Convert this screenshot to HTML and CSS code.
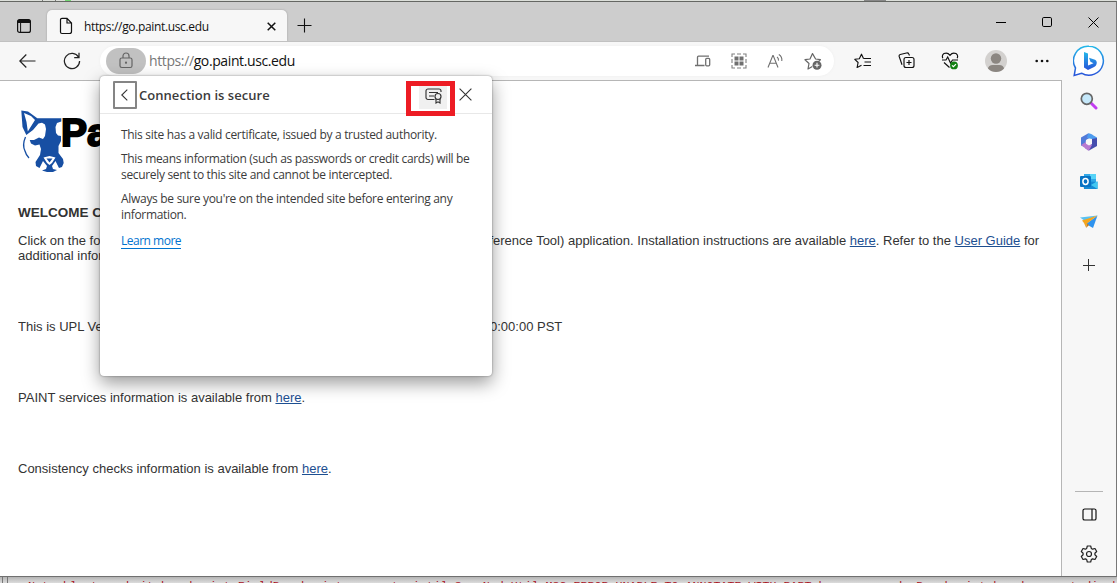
FILE: index.html
```html
<!DOCTYPE html>
<html lang="en">
<head>
<meta charset="utf-8">
<title>go.paint.usc.edu</title>
<link rel="stylesheet" href="styles.css">
</head>
<body>
<div class="desk-top"><i class="d1"></i><i class="d2"></i><i class="d3"></i><i class="d4"></i></div>
<div class="window">
  <header class="titlebar">
    <svg class="workspace" width="16" height="16" viewBox="0 0 16 16"><rect x="1.6" y="1.6" width="12.8" height="12.8" rx="2" fill="none" stroke="#111" stroke-width="1.2"/><path d="M1.5 5V3.5a2 2 0 0 1 2-2h9a2 2 0 0 1 2 2V5z" fill="#111"/><path d="M4.6 5v9" stroke="#111"/></svg>
    <div class="tab">
      <svg width="14" height="18" viewBox="0 0 14 18" fill="none" stroke="#111" stroke-width="1.2"><path d="M3 1.3h5L12.5 6v8.5a2 2 0 0 1-2 2H3a1.5 1.5 0 0 1-1.5-1.5V2.8A1.5 1.5 0 0 1 3 1.3zM8 1.5V6h4.5"/></svg>
      <span class="tab-title">https://go.paint.usc.edu</span>
      <svg class="tab-close" width="9" height="9" viewBox="0 0 9 9"><path d="M.7.7l7.6 7.6M8.3.7L.7 8.3" stroke="#111" stroke-width="1.5"/></svg>
    </div>
    <svg class="newtab" width="15" height="15" viewBox="0 0 15 15"><path d="M7.5.5v14M.5 7.5h14" stroke="#111" stroke-width="1.1"/></svg>
    <div class="controls">
      <svg width="10" height="11" viewBox="0 0 10 11"><path d="M0 5.5h10" stroke="#000"/></svg>
      <svg width="10" height="10" viewBox="0 0 10 10"><rect x=".5" y=".5" width="9" height="9" rx="1.3" fill="none" stroke="#000"/></svg>
      <svg width="11" height="11" viewBox="0 0 11 11"><path d="M.5.5l10 10M10.5.5l-10 10" stroke="#000"/></svg>
    </div>
  </header>
  <div class="body">
    <div class="main">
      <nav class="toolbar">
        <svg class="back" width="17" height="14" viewBox="0 0 17 14" fill="none" stroke="#222" stroke-width="1.2"><path d="M7.3.5L.8 7l6.5 6.5M.8 7H16.5"/></svg>
        <svg class="reload" width="18" height="18" viewBox="0 0 18 18" fill="none" stroke="#222" stroke-width="1.25"><path d="M15.6 5.2A7.6 7.6 0 1 0 16.6 9M16 .8v4.7h-4.8"/></svg>
        <div class="address">
          <span class="lock"><svg width="14" height="17" viewBox="0 0 14 17" fill="none" stroke="#656565" stroke-width="1.2"><rect x="1" y="6" width="12" height="9.5" rx="1.8"/><path d="M4 6V4a3 3 0 0 1 6 0v2"/><circle cx="7" cy="10.7" r=".5" fill="#656565"/></svg></span>
          <span class="url"><em>https://</em>go.paint.usc.edu</span>
          <div class="address-icons">
            <svg width="16" height="12" viewBox="0 0 16 12" fill="none" stroke="#707070" stroke-width="1.3"><path d="M2.5 10V2.2A1 1 0 0 1 3.5 1.2H14M0 10.5h9.5"/><rect x="10.7" y="3.4" width="4" height="7.4" rx="1"/></svg>
            <svg width="16" height="16" viewBox="0 0 16 16"><path d="M1 4V1h3M12 1h3v3M15 12v3h-3M4 15H1v-3M6 1h4M6 15h4M1 6v4M15 6v4" fill="none" stroke="#808080" stroke-width="1.1"/><path d="M3.5 3.5h4v4h-4zM8.5 3.5h4v4h-4zM3.5 8.5h4v4h-4zM8.5 8.5h4v4h-4z" fill="#707070"/></svg>
            <svg width="17" height="16" viewBox="0 0 17 16" fill="none" stroke="#707070" stroke-width="1.1"><path d="M1 14.5L5.8 2.5h.4L11 14.5M2.7 10.2h6.6M10 4q1.8 1.2 1.5 3.6M11.8 1.6q3.6 2.1 3 6.4"/></svg>
            <svg width="18" height="18" viewBox="0 0 18 18"><path d="M14.8 9.2l1.6-1.5-4.8-.7L8.5 1.6 6 7 1 7.7l4 3.8L4 17l4.3-2.5" fill="none" stroke="#666" stroke-width="1.2" stroke-linejoin="round"/><circle cx="13" cy="13.2" r="4.5" fill="#666"/><path d="M13 10.8v4.8M10.6 13.2h4.8" stroke="#fff" stroke-width="1.1"/></svg>
          </div>
        </div>
        <div class="actions">
          <svg width="18" height="16" viewBox="0 0 18 16" fill="none" stroke="#111" stroke-width="1.15"><path d="M9.5 5.5L7.5 1.2 5.3 5.7.8 6.3l3.3 3.2-1 5L7.5 12.3M9.5 5.5H17M10.5 9H17M9.5 12.5H17" stroke-linejoin="round"/></svg>
          <svg width="17" height="17" viewBox="0 0 17 17" fill="none" stroke="#111" stroke-width="1.15"><rect x="6" y="5.5" width="10" height="10" rx="2"/><path d="M11 8v5M8.5 10.5h5M4 12.8L1.2 4.5Q.8 3 2.2 2.5L8.5 1q1.7-.4 2.3 1l.7 1.5"/></svg>
          <svg width="18" height="18" viewBox="0 0 18 18" fill="none" stroke="#111" stroke-width="1.15"><path d="M1.8 6.2Q.5 3.2 3 1.6 6.5 0 9 3.3 11.5 0 15 1.6q2.5 1.6 1.2 4.6M1 8h4l1.7-3 2.8 6 2-3H17M3 10.5l5.5 5"/><circle cx="13" cy="13.4" r="3.9" fill="#128012" stroke="none"/><path d="M11 13.4l1.4 1.3 2.6-2.6" stroke="#fff"/></svg>
          <svg class="avatar" width="22" height="22" viewBox="0 0 22 22"><defs><clipPath id="av"><circle cx="11" cy="11" r="11"/></clipPath></defs><g clip-path="url(#av)"><path d="M0 0h22v22H0z" fill="#d3d1cf"/><circle cx="11" cy="8.5" r="5.2" fill="#8b8681"/><path d="M2.7 22v-3q1-4 5-4h6.6q4 0 5 4v3z" fill="#8b8681"/></g></svg>
          <svg class="more" width="14" height="4" viewBox="0 0 14 4" fill="#111"><circle cx="1.7" cy="2" r="1.3"/><circle cx="7" cy="2" r="1.3"/><circle cx="12.3" cy="2" r="1.3"/></svg>
        </div>
      </nav>
      <main class="page">
        <div class="logo">
          <svg width="44" height="64" viewBox="0 0 44 64"><path fill="#174fa3" d="M.3 .5L7 1.5L16.3 8.3H40.3V11.5L36 13L34.5 17L35 23L37 25.5L40 26V31L37.5 36V43L42 49L42.7 53L41 57L38 58L34.5 51L31 56L32 59L36 60L32 62H26L21 60.5L25 59L26 56L22 51L18.5 58L15 56L14.5 52L19 45L20 39L18.5 34.5L14 35.5L10 33.5L8.7 30H13L18 27.5L22 29L24 26L25 19L24 14.5L21 12.8L17.5 13.5L12 20L5.3 25L1.5 17Z"/><path fill="#fff" d="M3 3L10 6L14 10L6.8 21.500L5.500 12ZM22.500 47.500L28.500 46L34.500 47.500L31 53L28.500 55L26 53Z"/><path fill="#174fa3" d="M25.500 48.500h6l-3 4z"/><path fill="none" stroke="#174fa3" stroke-width="1.300" d="M4.500 27q-3.500 8-.5 14 1 4 4 7"/></svg>
          <span class="brand">Paint</span>
        </div>
        <h1>WELCOME <span>COMMUNITY</span></h1>
        <p class="intro"><span class="lead">Click on the following link to launch the PAINT (Personnel Action Re</span>ference Tool) application. Installation instructions are available <a>here</a>. Refer to the <a>User Guide</a> for<br>additional information.</p>
        <p class="version"><span class="lead">This is UPL Version 1.0.0, released on 01/01/2023 at 0</span>0:00:00 PST</p>
        <p class="services">PAINT services information is available from <a>here</a>.</p>
        <p class="checks">Consistency checks information is available from <a>here</a>.</p>
      </main>
    </div>
    <aside class="sidebar">
      <svg class="bing" width="32" height="34" viewBox="0 0 32 34"><defs><linearGradient id="bg" x2="0" y2="1"><stop stop-color="#24b8e9"/><stop offset="1" stop-color="#2754d9"/></linearGradient></defs><path d="M16 1.2a14.5 14.5 0 1 1-7.5 27L1.2 30.5 2.5 23A14.5 14.5 0 0 1 16 1.2z" fill="#fff" stroke="url(#bg)" stroke-width="1.5"/><path d="M11 7l4 1.5v12l5.5-2.3-3-1.5-1.5-4 6 2q2.5 1.5 1.500 4.500-.5 1.500-2 2.500L15 25l-4-2.500z" fill="url(#bg)"/></svg>
      <svg class="search" width="18" height="18" viewBox="0 0 18 18"><path d="M11 11l5 5" stroke="#c13cf0" stroke-width="3" stroke-linecap="round"/><circle cx="6.8" cy="6.8" r="5.5" fill="#c5e8fa" stroke="#666" stroke-width="1.7"/></svg>
      <svg class="m365" width="18" height="18" viewBox="0 0 18 18"><path d="M8 .5L1 4.5v8L5 14l1-7 6-3 1-2z" fill="#527ad9"/><path d="M8 .5h2l7 4v7l-5-2V6L7 5z" fill="#4d9cef"/><path d="M17 5v8l-8 4.5-4-2.5 7-4V6z" fill="#454dae"/><path d="M1 12l5-3 6 3-3 5.5H8z" fill="#b879d0"/><path d="M9 5.5l3 1.7v3.5l-3 1.8-3-1.8V7.2z" fill="#f7f7f7"/></svg>
      <svg class="outlook" width="18" height="17" viewBox="0 0 18 17"><path d="M4 1h12v10H4z" fill="#31a8e7"/><path d="M10 1h6v5h-6z" fill="#57d3f7"/><path d="M3 8l14.5 1v7H4z" fill="#168ad4"/><path d="M17.5 8v8L11 12z" fill="#43c8f2"/><rect x="0" y="3" width="11" height="11" rx="1" fill="#0873c4"/><ellipse cx="5.5" cy="8.5" rx="2.6" ry="2.9" fill="none" stroke="#fff" stroke-width="1.5"/></svg>
      <svg class="drop" width="18" height="14" viewBox="0 0 18 14"><path d="M0 2.5l17.5-2L5 6z" fill="#59c2f2"/><path d="M17.5.5L13 13 6 9z" fill="#2f93ee"/><path d="M2 5.5L17.5.5 7 8.5l-1 4L4 8z" fill="#f5a51d"/><path d="M7 8.5l2 1.5-3 3z" fill="#ca7a14"/></svg>
      <svg class="plus" width="12" height="12" viewBox="0 0 12 12"><path d="M5.5 0v12M0 6.5h12" stroke="#333"/></svg>
      <span class="rule"></span>
      <svg class="panel-icon" width="15" height="13" viewBox="0 0 15 13" fill="none" stroke="#111" stroke-width="1.2"><rect x="1" y="1" width="13" height="11" rx="1.6"/><path d="M10 1v11"/></svg>
      <svg class="gear" width="18" height="18" viewBox="0 0 18 18" fill="none" stroke="#222" stroke-width="1.2" stroke-linejoin="round"><path d="M7.3 1h3.4l.6 2.4 1.3.8 2.4-.7 1.7 3-1.8 1.7v1.6l1.8 1.7-1.7 3-2.4-.7-1.3.8-.6 2.4H7.3l-.6-2.4-1.3-.8-2.4.7-1.7-3 1.8-1.7V8.2L1.3 6.500l1.7-3 2.4.7 1.3-.8z"/><circle cx="9" cy="9" r="2.500"/></svg>
    </aside>
  </div>
</div>
<div class="desk-bottom">Not able to submit breakpoint FieldBreakpoint segment.ciutil.SyncNodeUtil.MSG ERROR UNABLE TO ANNOTATE WITH PART has occurred  Breakpoint has been set disabled and</div>

<section class="popover">
  <header class="pop-head">
    <span class="pop-back"><svg width="7" height="12" viewBox="0 0 7 12"><path d="M6.3.6L.8 6l5.5 5.4" fill="none" stroke="#333" stroke-width="1.1"/></svg></span>
    <h2>Connection is secure</h2>
    <span class="cert"><span><svg width="18" height="16" viewBox="0 0 18 16" fill="none" stroke="#333" stroke-width="1.15"><path d="M9.5 11.5H3A2 2 0 0 1 1 9.5V3a2 2 0 0 1 2-2h11a2 2 0 0 1 2 2v1M4 4.5h9M4 8h5"/><circle cx="13" cy="8.5" r="3"/><path d="M11 11v4l2-1.2 2 1.2v-4"/></svg></span></span>
    <svg class="pop-close" width="13" height="13" viewBox="0 0 13 13"><path d="M.6.6l11.8 11.8M12.4.6L.6 12.4" stroke="#333" stroke-width="1.1"/></svg>
  </header>
  <div class="pop-body">
    <p class="l1">This site has a valid certificate, issued by a trusted authority.</p>
    <p><span class="l2">This means information (such as passwords or credit cards) will be</span><br><span class="l3">securely sent to this site and cannot be intercepted.</span></p>
    <p><span class="l4">Always be sure you're on the intended site before entering any</span><br>information.</p>
    <a>Learn more</a>
  </div>
</section>
</body>
</html>
```
FILE: styles.css
```css
* { box-sizing: border-box; }
body { margin: 0; width: 1117px; height: 583px; overflow: hidden; position: relative; display: flex; flex-direction: column; background: #d7d7d7; font-family: "Open Sans", "Noto Sans", sans-serif; }
svg { display: block; flex: none; }
p, h1, h2 { margin: 0; }

.desk-top { height: 1px; background: #dcdfda; display: flex; }
.desk-top i { height: 1px; width: 1px; background: #777; }
.desk-top .d1 { margin-left: 42px; }
.desk-top .d2 { margin-left: 12px; }
.desk-top .d3 { margin-left: 9px; width: 6px; background: #73d873; }
.desk-top .d4 { margin-left: 793px; width: 22px; background: #888; }

.window { height: 576px; border-top: 1px solid #656763; border-right: 1px solid #777; border-bottom: 1px solid #707070; display: flex; flex-direction: column; background: #f7f7f7; }
.titlebar { height: 39px; background: #cdcdcd; display: flex; align-items: flex-start; }
.workspace { margin: 16px 15px 0 16px; }
.tab { width: 240px; height: 31px; margin-top: 8px; background: #f7f7f7; border-radius: 5px 5px 0 0; display: flex; align-items: center; padding: 1px 11px 0 12px; box-shadow: 0 0 2px #999; clip-path: inset(-3px -3px 0 -3px); }
.tab-title { margin-left: 11px; font-size: 12px; letter-spacing: -.35px; color: #111; white-space: nowrap; }
.tab-close { margin-left: auto; }
.newtab { margin: 16px 0 0 10px; }
.controls { margin: 15px 17px 0 auto; display: flex; gap: 36px; }
.body { flex: 1; min-height: 0; display: flex; border-top: 1px solid #c1c1c1; }
.main { width: 1062px; display: flex; flex-direction: column; }
.toolbar { height: 38px; display: flex; align-items: center; flex: none; padding: 0 0 1px 19px; }
.back { margin-right: 27px; }
.address { width: 734px; height: 30px; border-radius: 15px; background: #fff; display: flex; align-items: center; padding: 0 12px 0 6px; margin-left: 19px; box-shadow: 0 0 3px #eee; }
.lock { width: 40px; height: 26px; border-radius: 13px; background: #c1c1c1; display: flex; align-items: center; justify-content: center; }
.url { font-size: 14px; letter-spacing: -.39px; margin-left: 3px; color: #111; white-space: nowrap; }
.url em { font-style: normal; color: #777; }
.address-icons { margin-left: auto; display: flex; align-items: center; gap: 20px; }
.actions { display: flex; align-items: center; gap: 26px; margin-left: 20px; }
.more { margin-left: 2px; }

.page { flex: 1; background: #fff; border-top: 1px solid #b6b6b6; border-right: 1px solid #b6b6b6; padding: 29px 0 0 18px; font-family: "Liberation Sans", Arial, sans-serif; font-size: 13px; line-height: 15px; color: #333; white-space: nowrap; overflow: hidden; }
.page a { color: #1d4f91; text-decoration: underline; }
.logo { display: flex; height: 64px; padding-left: 3px; }
.brand { font-size: 39px; font-weight: 700; line-height: 46px; color: #000; margin-left: -4px; -webkit-text-stroke: 2px #000; }
.page h1 { width: 90px; font-size: 13.5px; line-height: 15px; margin-top: 31px; }
.intro { margin-top: 13px; }
.lead { display: inline-block; width: 472px; overflow: hidden; vertical-align: top; }
.intro .lead { width: 471.4px; }
.version { margin-top: 56px; }
.services, .checks { margin-top: 56px; }

.sidebar { flex: 1; display: flex; flex-direction: column; align-items: center; padding: 3px 0 0 0; }
.search { margin-top: 13px; }
.m365 { margin-top: 23px; }
.outlook { margin-top: 22px; }
.drop { margin-top: 25px; }
.plus { margin-top: 30px; }
.rule { width: 28px; height: 1px; background: #b5b5b5; margin-top: 220px; }
.panel-icon { margin-top: 16px; }
.gear { margin-top: 24px; }

.desk-bottom { height: 6px; padding: 1px 0 0 28px; overflow: hidden; white-space: pre; font: 11.66px/17px "Liberation Mono", monospace; color: #a8121c; background: linear-gradient(90deg, transparent 2px, #777 2px, #777 3px, transparent 3px, transparent 7px, #777 7px, #777 8px, transparent 8px), linear-gradient(#b4b4b4, #dcdcdc); }

.popover { position: absolute; left: 100px; top: 76px; width: 392px; height: 300px; background: #fff; border-radius: 4px; box-shadow: 0 0 2px rgba(0,0,0,.45), 0 7px 18px rgba(0,0,0,.4); color: #3b3b3b; }
.pop-head { height: 38px; border-bottom: 1px solid #e8e8e8; display: flex; align-items: center; padding-left: 13px; }
.pop-back { width: 24px; height: 28px; border: 2px solid #858585; border-radius: 1px; display: flex; align-items: center; justify-content: center; padding-right: 2px; }
.pop-head h2 { width: 133px; margin-left: 2px; font-size: 13px; font-weight: 600; letter-spacing: .04px; white-space: nowrap; }
.cert { width: 49px; height: 35px; border: 5px solid #ed1c24; margin: 5px 4px 0 134px; padding: 0 3px 2px 8px; align-self: flex-start; }
.cert > span { display: flex; height: 23px; width: 28px; background: #f0f0f0; padding: 2px 0 0 6px; }
.pop-body { padding: 13px 20px 0 21px; font-size: 12px; line-height: 16px; white-space: nowrap; letter-spacing: -.33px; }
.pop-body p { margin-bottom: 8px; }
.pop-body .l1, .pop-body .l4 { letter-spacing: -.3px; }
.pop-body a { display: inline-block; color: #0073cf; border-bottom: 1px solid #0073cf; margin-top: 2px; line-height: 15px; letter-spacing: -.5px; }
```
